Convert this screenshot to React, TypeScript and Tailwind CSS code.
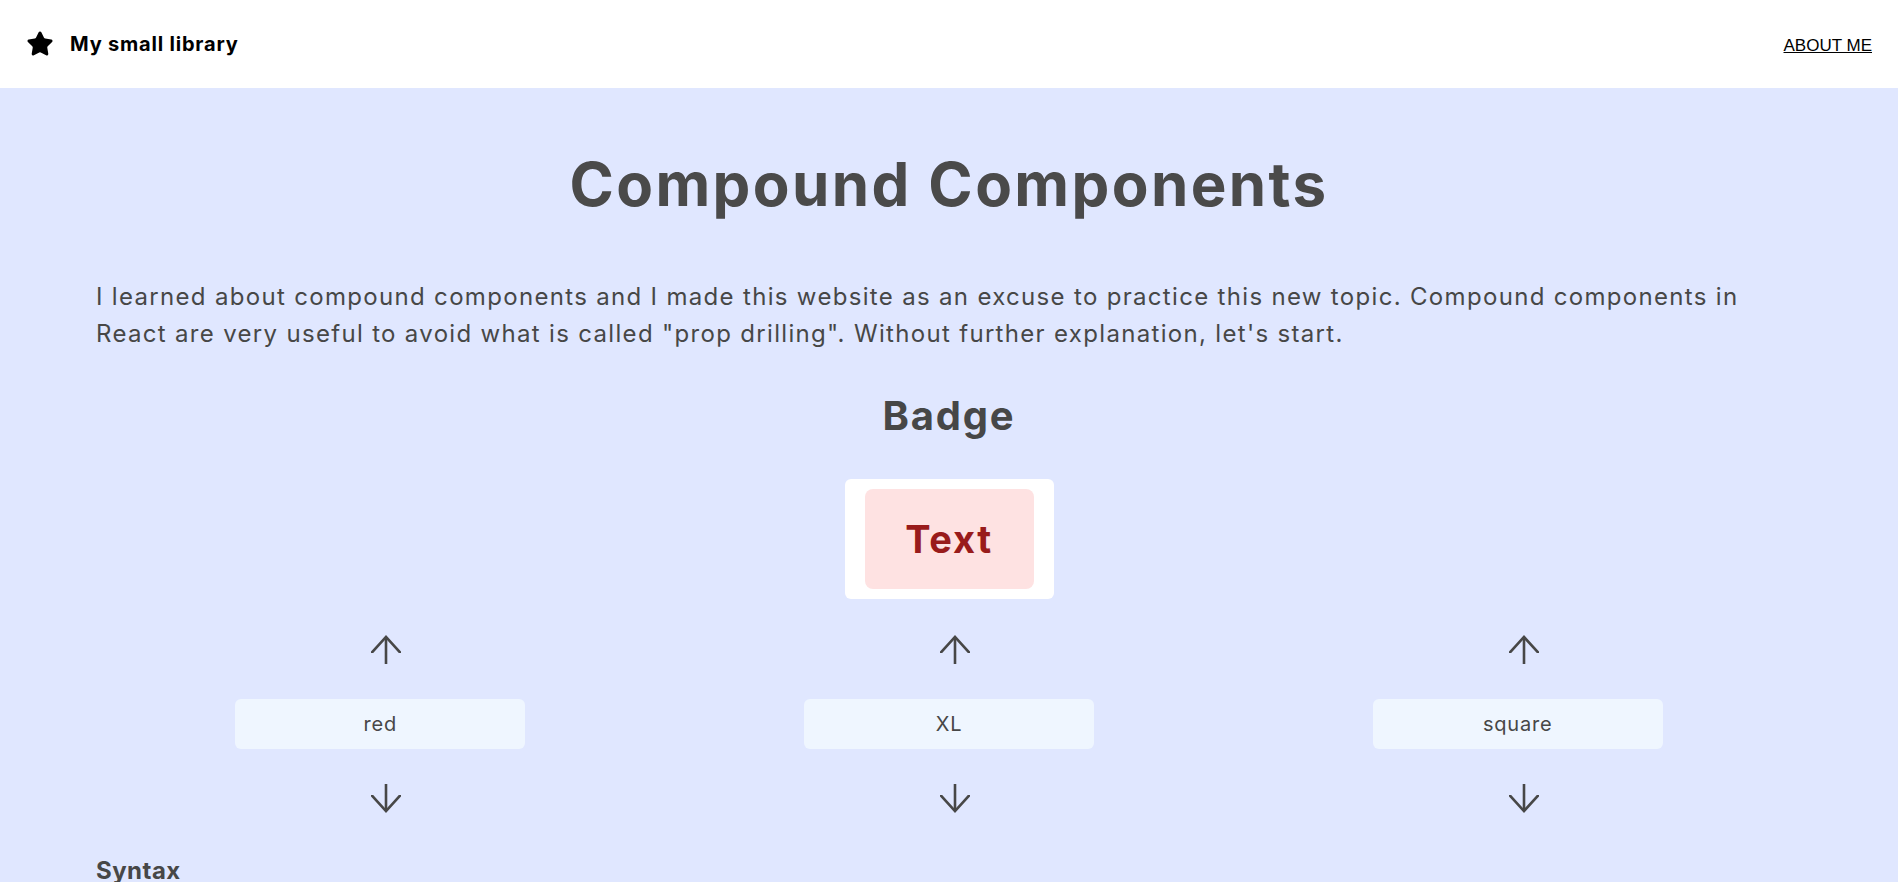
import { Star } from 'lucide-react';

const options = ['red', 'XL', 'square'];

function Arrow({ down = false }: { down?: boolean }) {
  return (
    <svg
      width="30"
      height="30"
      viewBox="0 0 30 30"
      className={down ? 'ml-3 rotate-180' : 'ml-3'}
      fill="none"
      stroke="#474747"
      strokeWidth="2.6"
    >
      <defs>
        <clipPath id="head">
          <rect x="0" y="0" width="30" height="19" />
        </clipPath>
      </defs>
      <line x1="15" y1="3" x2="15" y2="30" />
      <polyline points="0,19.5 15,3 30,19.5" clipPath="url(#head)" strokeLinejoin="miter" />
    </svg>
  );
}

export default function App() {
  return (
    <div className="min-h-screen bg-[#e0e7ff] font-['Inter',sans-serif] text-[#474747]">
      <header className="flex h-[88px] items-center justify-between bg-white pl-[26px] pr-[26px]">
        <div className="flex items-center gap-4">
          <Star size={28} fill="black" stroke="black" strokeWidth={1.5} />
          <span className="text-[20px] font-bold tracking-[0.04em] text-black">My small library</span>
        </div>
        <a href="#" className="mt-1 font-['Liberation_Sans',sans-serif] text-[17px] text-black underline">
          ABOUT ME
        </a>
      </header>

      <main className="px-24">
        <h1 className="mt-[66px] text-center text-[60px] font-bold leading-none tracking-[0.04em] text-[#4a4a4a]">
          Compound Components
        </h1>
        <p className="mt-16 text-[24px] leading-[37px] tracking-[0.055em]">
          I learned about compound components and I made this website as an excuse to practice this new topic.
          Compound components in React are very useful to avoid what is called "prop drilling". Without further
          explanation, let's start.
        </p>

        <section>
          <h2 className="mt-[44px] text-center text-[40px] font-bold leading-none tracking-[0.045em]">Badge</h2>
          <div className="mt-[43px] flex justify-center">
            <div className="rounded-md bg-white px-5 py-2.5">
              <div className="flex h-[100px] w-[169px] items-center justify-center rounded-lg bg-[#fee2e2] text-[38px] font-bold tracking-[0.045em] text-[#991b1b]">
                Text
              </div>
            </div>
          </div>
          <div className="mt-[35px] grid grid-cols-3">
            {options.map((o) => (
              <div key={o} className="flex flex-col items-center">
                <Arrow />
                <div className="mt-[35px] flex h-[50px] w-[290px] items-center justify-center rounded-md bg-[#eff6ff] text-[20px] tracking-[0.04em]">
                  {o}
                </div>
                <div className="mt-[35px]">
                  <Arrow down />
                </div>
              </div>
            ))}
          </div>
        </section>

        <h3 className="mt-[45px] text-[24px] font-bold leading-none tracking-[0.02em]">Syntax</h3>
      </main>
    </div>
  );
}
